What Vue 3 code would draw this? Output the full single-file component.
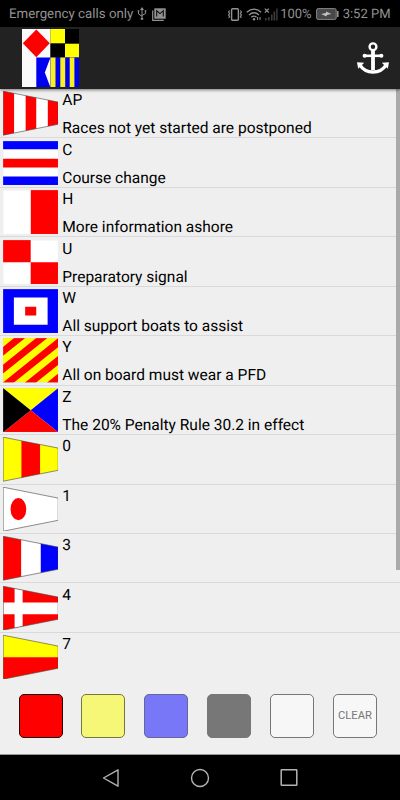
<template>
  <div class="screen">
    <header class="statusbar">
      <span class="carrier">Emergency calls only</span>
      <svg class="usb" width="10" height="14" viewBox="0 0 10 14" fill="none" stroke="#929292">
        <path d="M5 2v9M1.5 4.5V7L5 9.2M8.5 4.5v2L5 8.5" />
        <path d="M5 0l2 3H3z M3.8 11h2.4v1.8H3.8z M.7 3.2h1.6v1.6H.7z M7.7 3.2h1.6v1.6H7.7z" fill="#929292" stroke="none" />
      </svg>
      <svg class="mail" width="14" height="13" viewBox="0 0 14 13" fill="none" stroke="#929292">
        <path d="M.7 2.5v9.8h11" stroke-width="1.2" />
        <path d="M2.3.3h11.4v10.4H2.3z" fill="#929292" stroke="none" />
        <path d="M4.7 8.5V2.8L8 5.6l3.3-2.8v5.7" stroke="#111" stroke-width="1.1" />
      </svg>
      <div class="status-right">
        <svg width="16" height="13" viewBox="0 0 16 13" fill="none" stroke="#929292">
          <rect x="4.6" y=".8" width="6.8" height="11.4" rx="1" stroke-width="1.4" />
          <path d="M2.6 2.5l-1 1.5 1 1.5-1 1.5 1 1.5-1 1.5M13.4 2.5l1 1.5-1 1.5 1 1.5-1 1.5 1 1.5" stroke-width="1.2" />
        </svg>
        <svg class="wifi" width="16" height="13" viewBox="0 0 16 13" fill="none" stroke="#929292" stroke-width="1.3">
          <path d="M.8 4.3Q8-2 15.2 4.3M3 6.9q5-4.4 10 0M5.3 9.3q2.7-2.4 5.2 0" />
          <circle cx="8" cy="11.2" r="1.2" fill="#929292" stroke="none" />
          <path d="M11.6 9v3M14 9v3" stroke-width="1" />
        </svg>
        <svg class="signal" width="14" height="13" viewBox="0 0 14 13">
          <path d="M.8.6l4 4M4.8.6l-4 4" stroke="#929292" stroke-width="1.3" />
          <path d="M1 10h1.6v2.5H1z M4 9h1.6v3.5H4z M7 6.5h1.6v6H7z M9.6 3.5h1.6v9H9.6z M12.2.5h1.4v12h-1.4z" fill="#3c3c3c" />
        </svg>
        <span class="percent">100%</span>
        <svg class="battery" width="23" height="12" viewBox="0 0 23 12">
          <rect x=".6" y=".6" width="19.6" height="10.8" rx="1.5" fill="#484848" stroke="#858585" />
          <path d="M21 3h1.6v6H21z" fill="#929292" />
          <path d="M5 6l5-1V3.4L15.5 6l-4.8 1v1.6z" fill="#c4c4c4" />
        </svg>
        <span class="clock">3:52 PM</span>
      </div>
    </header>

    <div class="toolbar">
      <svg class="logo" width="57" height="58" viewBox="0 0 57 58">
        <path fill="#fafafa" d="M0 0h28.5v58H0z" />
        <path fill="#f00" d="M14.3.6L27.8 14.3 14.3 28.2.8 14.3z" />
        <path fill="#ff0" d="M28.5 0H43v14.5H28.5z M43 14.5h14V28.6H43z" />
        <path fill="#000" d="M43 0h14v14.5H43z M28.5 14.5H43v14.1H28.5z" />
        <path fill="#0000f0" d="M14.3 28.6H57V58H14.3z" />
        <path fill="#fafafa" d="M28.3 29v29L22.8 43.5z" />
        <path fill="#f8f020" d="M28.5 28.6h5V58h-5z M38.3 28.6h4.9V58h-4.9z M47.7 28.6h4.7V58h-4.7z" />
      </svg>
      <svg class="anchor" width="34" height="34" viewBox="0 0 34 34" fill="none" stroke="#fff">
        <circle cx="17" cy="5.8" r="3.4" stroke-width="2.4" />
        <path d="M17 9v20" stroke-width="3.8" />
        <path d="M8.5 14.8h17" stroke-width="2.6" />
        <circle cx="8.6" cy="14.8" r="2" fill="#fff" stroke="none" />
        <circle cx="25.4" cy="14.8" r="2" fill="#fff" stroke="none" />
        <path d="M3.8 23.8C7 28.8 11.5 31 17 31s10-2.2 13.2-7.2" stroke-width="3.3" />
        <path d="M1 21.2l7.2.6-6 6z M33 21.2l-7.2.6 6 6z" fill="#fff" stroke="none" />
      </svg>
    </div>

    <main class="list">
      <div class="row" v-for="f in flags" :key="f.name">
        <svg class="flag" viewBox="0 0 55 44" preserveAspectRatio="none">
          <defs>
            <clipPath :id="'clip-' + f.name"><path :d="f.pennant ? pennant : square" /></clipPath>
          </defs>
          <g :clip-path="`url(#clip-${f.name})`">
            <path v-for="(p, i) in f.parts" :key="i" :fill="p[0]" :d="p[1]" />
          </g>
          <path :d="f.pennant ? pennant : square" fill="none" :stroke="f.pennant ? '#444' : '#ccc'" :stroke-width="f.pennant ? 0.6 : 0.3" />
        </svg>
        <div class="info">
          <span>{{ f.name }}</span>
          <span>{{ f.text }}</span>
        </div>
      </div>
      <div class="scrollbar"></div>
    </main>

    <footer class="palette">
      <button v-for="c in colors" :key="c.name" class="swatch" :class="c.name">{{ c.label }}</button>
    </footer>

    <nav class="navbar">
      <svg width="18" height="20" viewBox="0 0 18 20" fill="none" stroke="#b4b4b4" stroke-width="1.4" stroke-linejoin="round">
        <path d="M16 1.8v16.4L1.5 10z" />
      </svg>
      <svg width="20" height="20" viewBox="0 0 20 20" fill="none" stroke="#b4b4b4" stroke-width="1.4">
        <circle cx="10" cy="10" r="8.5" />
      </svg>
      <svg width="18" height="20" viewBox="0 0 18 20" fill="none" stroke="#b4b4b4" stroke-width="1.5">
        <rect x="1.2" y="1.7" width="15.6" height="15.6" rx=".6" />
      </svg>
    </nav>
  </div>
</template>

<script setup>
const R = '#f00'
const Y = '#ff0'
const B = '#00f'
const W = '#fff'
const K = '#000'

const square = 'M0 0H55V44H0z'
const pennant = 'M.2 .2L54.8 11V33L.2 43.8z'

// diagonal bands, lower left to upper right
const bands = [1, 3, 5, 7, 9]
  .map(i => `M${i * 11} 0H${(i + 1) * 11}L0 ${(i + 1) * 8.8}V${i * 8.8}z`)
  .join(' ')

const flags = [
  { name: 'AP', text: 'Races not yet started are postponed', pennant: true, parts: [[W, square], [R, 'M0 0H11V44H0z M22.5 0H33V44H22.5z M44.5 0H55V44H44.5z']] },
  { name: 'C', text: 'Course change', parts: [[W, square], [B, 'M0 0H55V8.3H0z M0 35.3H55V44H0z'], [R, 'M0 17.7H55V26.3H0z']] },
  { name: 'H', text: 'More information ashore', parts: [[W, square], [R, 'M27.6 0H55V44H27.6z']] },
  { name: 'U', text: 'Preparatory signal', parts: [[W, square], [R, 'M0 0H27.5V22H0z M27.5 22H55V44H27.5z']] },
  { name: 'W', text: 'All support boats to assist', parts: [[B, square], [W, 'M10.8 8.5H44.3V35.5H10.8z'], [R, 'M22 17.7H33V26.3H22z']] },
  { name: 'Y', text: 'All on board must wear a PFD', parts: [[Y, square], [R, bands]] },
  { name: 'Z', text: 'The 20% Penalty Rule 30.2 in effect', parts: [[Y, 'M0 0H55L27.5 22z'], [B, 'M55 0V44L27.5 22z'], [R, 'M0 44H55L27.5 22z'], [K, 'M0 0V44L27.5 22z']] },
  { name: '0', text: '', pennant: true, parts: [[Y, square], [R, 'M18.3 0H36.8V44H18.3z']] },
  { name: '1', text: '', pennant: true, parts: [[W, square], [R, 'M7.5 22a7.8 11 0 1 0 15.6 0a7.8 11 0 1 0 -15.6 0z']] },
  { name: '3', text: '', pennant: true, parts: [[W, square], [R, 'M0 0H18V44H0z'], [B, 'M37.5 0H55V44H37.5z']] },
  { name: '4', text: '', pennant: true, parts: [[R, square], [W, 'M11.5 0H19.5V44H11.5z M0 16.3H55V28H0z']] },
  { name: '7', text: '', pennant: true, parts: [[Y, square], [R, 'M0 22H55V44H0z']] }
]

const colors = [
  { name: 'red' },
  { name: 'yellow' },
  { name: 'blue' },
  { name: 'black' },
  { name: 'white' },
  { name: 'clear', label: 'CLEAR' }
]
</script>

<style>
body { margin: 0; }
</style>

<style scoped>
.screen {
  width: 400px; height: 800px; overflow: hidden;
  display: flex; flex-direction: column;
  background: #efefef; color: #000;
  font-family: Roboto, "Liberation Sans", sans-serif;
  text-rendering: geometricPrecision;
}
.statusbar {
  height: 27px; flex: none; box-sizing: border-box;
  display: flex; align-items: center;
  padding: 1px 9.5px 0 9px;
  background: #000; color: #929292; font-size: 13.3px;
}
.carrier { width: 125px; white-space: nowrap; }
.usb { margin-left: 3px; }
.mail { margin-left: 5px; }
.status-right { display: flex; align-items: center; margin-left: auto; font-size: 13px; }
.wifi { margin-left: 3px; }
.signal { margin-left: 2px; }
.percent { margin-left: 2px; }
.battery { margin-left: 4px; }
.clock { margin-left: 4px; white-space: nowrap; }

.toolbar {
  height: 62px; flex: none; box-sizing: border-box;
  display: flex; justify-content: space-between;
  padding: 2px 10px 0 22px;
  background: #222; position: relative; z-index: 1;
  box-shadow: 0 1px 3px rgba(0,0,0,0.5);
}
.anchor { margin-top: 12px; }

.list { height: 593px; flex: none; overflow: hidden; position: relative; }
.row {
  height: 49.45px; box-sizing: border-box;
  display: flex; padding: 2.2px 2.5px;
  border-bottom: 1px solid #d9d9d9;
}
.row:nth-child(12) { border-bottom: 0; }
.flag { width: 55.4px; height: 44.4px; flex: none; display: block; }
.info {
  display: flex; flex-direction: column; justify-content: space-between;
  height: 46px; margin-left: 4.4px;
  font-size: 15.53px; line-height: 18px; white-space: nowrap;
}
.scrollbar {
  position: absolute; top: 0; right: 0;
  width: 4.5px; height: 480.5px; background: #aaa;
}

.palette {
  height: 73px; flex: none; box-sizing: border-box;
  display: flex; justify-content: space-between;
  padding: 11.5px 23px 0 18.5px;
  border-bottom: 1px solid #999;
}
.swatch {
  width: 44px; height: 44px; box-sizing: border-box; padding: 0;
  border: 1px solid #777; border-radius: 5px;
  font-family: inherit; font-size: 11.2px; color: #777;
}
.red { background: #f00; border-color: #200; }
.yellow { background: #f7f777; border-color: #77773c; }
.blue { background: #7777f7; border-color: #66669a; }
.black { background: #777; }
.white, .clear { background: #f7f7f7; }

.navbar {
  flex: 1; background: #000;
  display: flex; justify-content: center; align-items: center;
  gap: 70px;
}
</style>
